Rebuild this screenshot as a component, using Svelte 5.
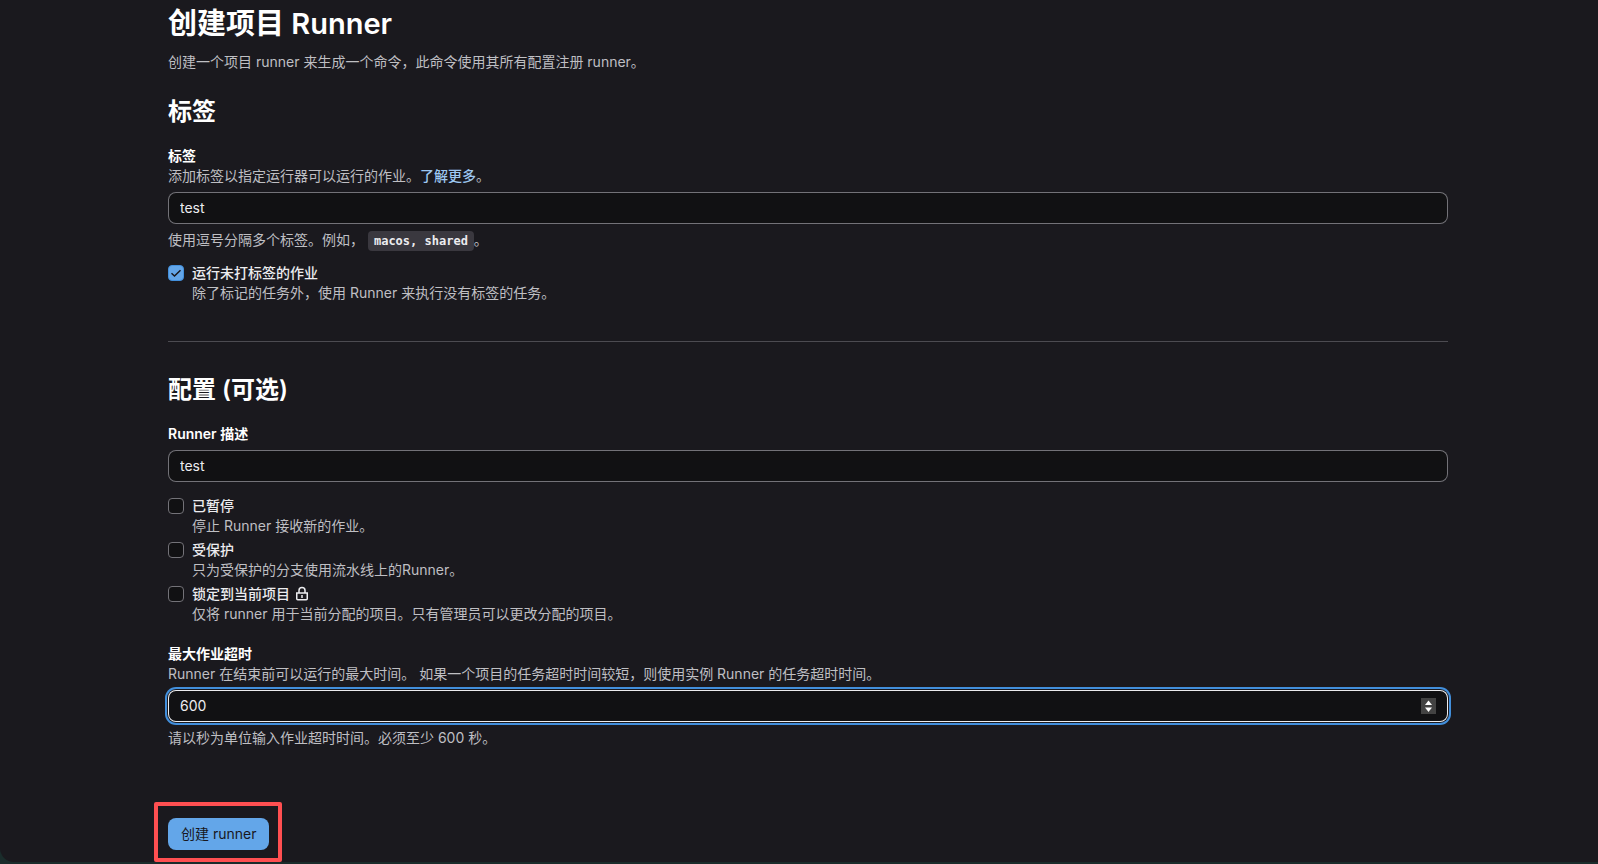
<script>
  let tags = $state('test');
  let description = $state('test');
  let timeout = $state(600);
  let runUntagged = $state(true);

  let options = $state([
    { id: 'paused', label: '已暂停', help: '停止 Runner 接收新的作业。', checked: false },
    { id: 'protected', label: '受保护', help: '只为受保护的分支使用流水线上的Runner。', checked: false },
    {
      id: 'locked',
      label: '锁定到当前项目',
      help: '仅将 runner 用于当前分配的项目。只有管理员可以更改分配的项目。',
      checked: false,
      lock: true
    }
  ]);
</script>

{#snippet checkmark()}
  <svg class="checkmark" viewBox="0 0 16 16" aria-hidden="true">
    <path d="M3.5 8.3 6.5 11l6-5.8" fill="none" stroke="#18171d" stroke-width="1.5" />
  </svg>
{/snippet}

<div class="page">
  <main>
    <h1>创建项目 Runner</h1>
    <p class="intro">创建一个项目 runner 来生成一个命令，此命令使用其所有配置注册 runner。</p>

    <form onsubmit={(e) => e.preventDefault()}>
      <section>
        <h2>标签</h2>
        <div class="group">
          <label class="title" for="tags">标签</label>
          <p class="desc">添加标签以指定运行器可以运行的作业。<a href="#tags">了解更多</a>。</p>
          <input class="field" id="tags" type="text" autocomplete="off" bind:value={tags} />
          <p class="hint">使用逗号分隔多个标签。例如， <code>macos, shared</code>。</p>
        </div>

        <div class="check">
          <span class="box">
            <input id="untagged" type="checkbox" bind:checked={runUntagged} />
            {@render checkmark()}
          </span>
          <label for="untagged">运行未打标签的作业</label>
          <p>除了标记的任务外，使用 Runner 来执行没有标签的任务。</p>
        </div>
      </section>

      <hr />

      <section>
        <h2>配置 (可选)</h2>
        <div class="group">
          <label class="title" for="description">Runner 描述</label>
          <input class="field" id="description" type="text" autocomplete="off" bind:value={description} />
        </div>

        <div class="checks">
          {#each options as option (option.id)}
            <div class="check">
              <span class="box">
                <input id={option.id} type="checkbox" bind:checked={option.checked} />
                {@render checkmark()}
              </span>
              <label for={option.id}>
                {option.label}
                {#if option.lock}
                  <svg class="lock" viewBox="0 0 16 16" aria-hidden="true">
                    <path
                      d="M5 7V4.5a3 3 0 0 1 6 0V7M2.75 7h10.5v5.75a1 1 0 0 1-1 1h-8.5a1 1 0 0 1-1-1z"
                      fill="none"
                      stroke="currentColor"
                      stroke-width="1.5"
                    />
                    <path d="M7.25 9h1.5v3h-1.5z" fill="currentColor" />
                  </svg>
                {/if}
              </label>
              <p>{option.help}</p>
            </div>
          {/each}
        </div>

        <div class="group">
          <label class="title" for="timeout">最大作业超时</label>
          <p class="desc">
            Runner 在结束前可以运行的最大时间。 如果一个项目的任务超时时间较短，则使用实例 Runner 的任务超时时间。
          </p>
          <div class="number">
            <input class="field active" id="timeout" type="number" bind:value={timeout} />
            <span class="stepper">
              <button type="button" aria-label="增加" onclick={() => timeout++}>
                <svg viewBox="0 0 15 8"><path d="M7.5 2.5 11 7H4z" fill="#fff" /></svg>
              </button>
              <button type="button" aria-label="减少" onclick={() => timeout--}>
                <svg viewBox="0 0 15 8"><path d="M4 1.5h7L7.5 6z" fill="#fff" /></svg>
              </button>
            </span>
          </div>
          <p class="hint">请以秒为单位输入作业超时时间。必须至少 600 秒。</p>
        </div>
      </section>

      <div class="actions">
        <button class="submit" type="submit">创建 runner</button>
        <span class="highlight"></span>
      </div>
    </form>
  </main>
</div>

<style>
  :global(body) {
    margin: 0;
    background: #1a2c2b;
  }

  .page {
    box-sizing: border-box;
    min-height: calc(100vh - 2px);
    padding: 0 16px 12px 34px;
    border-radius: 0 0 0 14px;
    background: #1a191e;
    color: #ececef;
    font: 14px/20px Inter, "Noto Sans CJK SC", sans-serif;
  }

  main {
    max-width: 1280px;
    margin: 0 auto;
  }

  h1,
  h2 {
    margin: 0;
    color: #fff;
    font-weight: 600;
  }

  h1 {
    padding-top: 4px;
    font-size: 29px;
    line-height: 40px;
  }

  h2 {
    padding: 25px 0 19px;
    font-size: 24px;
    line-height: 30px;
  }

  p {
    margin: 0;
    color: #bfbfc3;
  }

  .intro {
    padding-top: 8px;
  }

  a {
    color: #9dc7f1;
    font-weight: 500;
    text-decoration: none;
  }

  .title {
    display: block;
    color: #fff;
    font-weight: 600;
  }

  .field {
    display: block;
    box-sizing: border-box;
    width: 100%;
    height: 32px;
    margin-top: 6px;
    padding: 0 12px 2px;
    border: 0;
    border-radius: 8px;
    outline: none;
    background: #111113;
    box-shadow: inset 0 0 0 1px #737278;
    color: #ececef;
    font: inherit;
  }

  .field:focus,
  .field.active {
    box-shadow: inset 0 0 0 1px #ececef, 0 0 0 1px #1a191e, 0 0 0 3px #428fdc;
  }

  .hint {
    padding-top: 6px;
  }

  code {
    padding: 3px 6px;
    border-radius: 4px;
    background: #3a383f;
    color: #ececef;
    font: bold 12px/16px "DejaVu Sans Mono", monospace;
  }

  .check {
    display: grid;
    grid-template-columns: 16px 1fr;
    column-gap: 8px;
  }

  .check label {
    display: flex;
    align-items: center;
    gap: 4px;
    font-weight: 500;
  }

  .check p {
    grid-column: 2;
  }

  .group + .check {
    margin-top: 13px;
  }

  .checks {
    display: grid;
    gap: 4px;
    margin: 14px 0 20px;
  }

  .box {
    display: grid;
    width: 16px;
    height: 16px;
    margin-top: 2px;
  }

  .box input {
    grid-area: 1 / 1;
    width: 16px;
    height: 16px;
    margin: 0;
    appearance: none;
    border: 1px solid #737278;
    border-radius: 4px;
    background: #111113;
  }

  .box input:checked {
    border-color: #428fdc;
    background: #63a6e9;
  }

  .checkmark {
    grid-area: 1 / 1;
    visibility: hidden;
    pointer-events: none;
  }

  .box input:checked + .checkmark {
    visibility: visible;
  }

  .lock {
    width: 16px;
    height: 16px;
  }

  hr {
    height: 1px;
    margin: 38px 0 8px;
    border: 0;
    background: #4c4b51;
  }

  .number {
    position: relative;
  }

  .number .field {
    appearance: textfield;
  }

  .number .field::-webkit-inner-spin-button {
    appearance: none;
    margin: 0;
  }

  .stepper {
    position: absolute;
    top: 8px;
    right: 12px;
    display: grid;
    width: 15px;
    background: #434343;
  }

  .stepper button {
    height: 8px;
    padding: 0;
    border: 0;
    background: none;
  }

  .stepper svg {
    display: block;
    width: 15px;
    height: 8px;
  }

  .actions {
    position: relative;
    width: fit-content;
    margin-top: 70px;
  }

  .submit {
    display: block;
    height: 32px;
    padding: 0 13px;
    border: 0;
    border-radius: 8px;
    background: #63a6e9;
    color: #18171d;
    font: inherit;
  }

  .highlight {
    position: absolute;
    inset: -16px -13px -12px -14px;
    border: 4px solid #ff4f51;
    border-radius: 2px;
    pointer-events: none;
  }
</style>
